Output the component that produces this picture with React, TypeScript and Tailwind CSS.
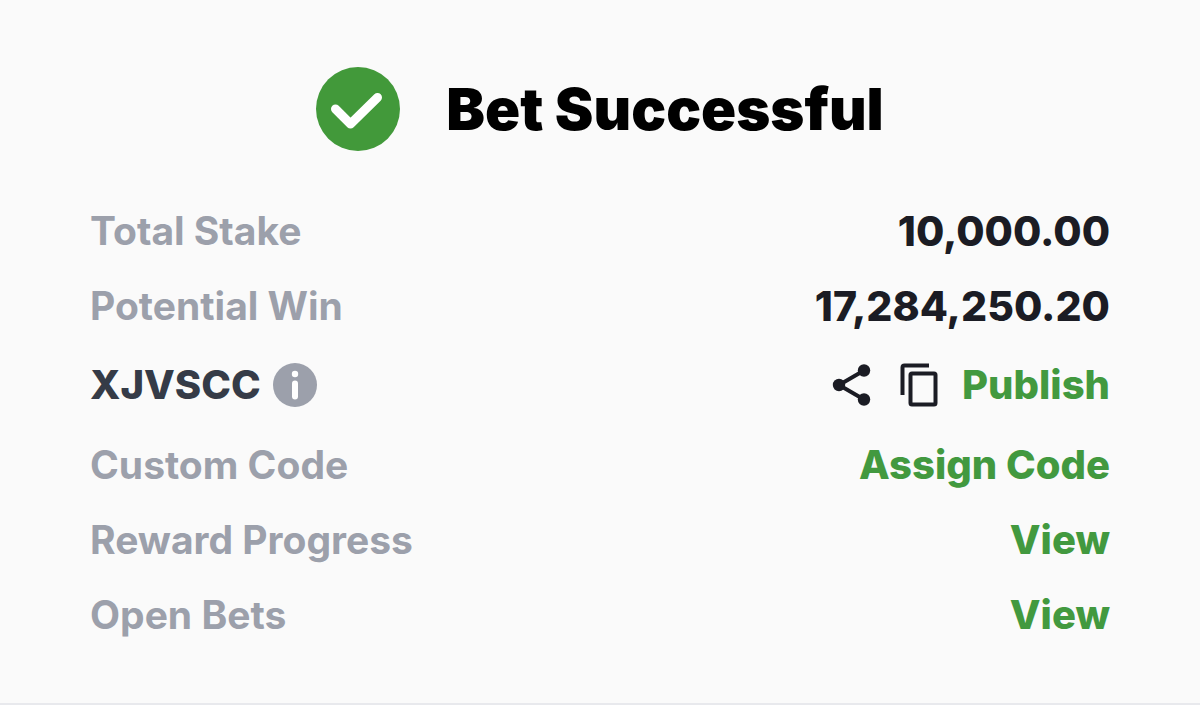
import type { ReactNode } from "react";

function Row({ label, children }: { label: ReactNode; children: ReactNode }) {
  return (
    <div className="flex h-[75px] items-center justify-between">
      <dt className="text-[39px] font-bold text-[#9ca0ab]">{label}</dt>
      <dd className="flex items-center text-[41px] font-extrabold text-[#1b1c24]">{children}</dd>
    </div>
  );
}

function Action({ children, label }: { children: string; label?: string }) {
  return (
    <button type="button" aria-label={label} className="cursor-pointer text-[40px] font-extrabold text-[#42993f]">
      {children}
    </button>
  );
}

export default function App() {
  return (
    <main className="min-h-screen bg-[#fafafa] font-['Inter',sans-serif] text-[40px] leading-[46px]">
      <section className="border-b-2 border-[#e8e9ed] px-[90px] pt-[67px] pb-[51px]">
        <header className="flex items-center justify-center gap-[46px]">
          <svg viewBox="0 0 84 84" className="size-[84px]" aria-hidden="true">
            <circle cx="42" cy="42" r="42" fill="#42993a" />
            <path d="M19.5 42 34.5 57 61.500 30.500" fill="none" stroke="#fff" strokeWidth="9" strokeLinecap="round" strokeLinejoin="round" />
          </svg>
          <h1 className="text-[58px] leading-[72px] font-black text-black">Bet Successful</h1>
        </header>
        <dl className="mt-[42px]">
          <Row label="Total Stake">10,000.00</Row>
          <Row label="Potential Win">17,284,250.20</Row>
          <div className="flex h-[84px] items-center justify-between">
            <dt className="flex items-center gap-3 font-extrabold text-[#353b47]">
              XJVSCC
              <button type="button" aria-label="About booking code" className="cursor-pointer">
                <svg viewBox="0 0 44 44" className="size-[44px]">
                  <circle cx="22" cy="22" r="22" fill="#9ca0ab" />
                  <circle cx="22" cy="11" r="3.200" fill="#fff" />
                  <path d="M22 20.500v13" stroke="#fff" strokeWidth="6" strokeLinecap="round" />
                </svg>
              </button>
            </dt>
            <dd className="flex items-center">
              <button type="button" aria-label="Share" className="mr-7 cursor-pointer">
                <svg viewBox="0 0 40 42" className="h-[42px] w-10" fill="#1b1c24" stroke="#1b1c24">
                  <path d="M32 6.500 7 21 32 35.500" fill="none" strokeWidth="4" />
                  <circle cx="32" cy="6.500" r="6.200" stroke="none" />
                  <circle cx="7" cy="21" r="6.200" stroke="none" />
                  <circle cx="32" cy="35.500" r="6.200" stroke="none" />
                </svg>
              </button>
              <button type="button" aria-label="Copy code" className="mr-6 cursor-pointer">
                <svg viewBox="0 0 38 44" className="h-11 w-[38px]" fill="none" stroke="#1b1c24" strokeWidth="4">
                  <path d="M2.500 32V4.500q0-2 2-2H29" />
                  <rect x="10.500" y="10.500" width="25" height="31" rx="1.500" />
                </svg>
              </button>
              <Action>Publish</Action>
            </dd>
          </div>
          <Row label="Custom Code"><Action>Assign Code</Action></Row>
          <Row label="Reward Progress"><Action label="View reward progress">View</Action></Row>
          <Row label="Open Bets"><Action label="View open bets">View</Action></Row>
        </dl>
      </section>
    </main>
  );
}
